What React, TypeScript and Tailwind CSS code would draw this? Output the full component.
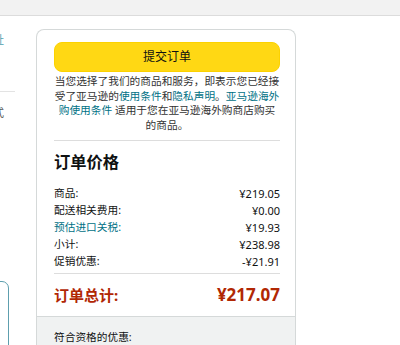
const rows = [
  { label: "商品:", value: "¥219.05" },
  { label: "配送相关费用:", value: "¥0.00" },
  { label: "预估进口关税:", value: "¥19.93", link: true },
  { label: "小计:", value: "¥238.98" },
  { label: "促销优惠:", value: "-¥21.91" },
];

const App = () => {
  return (
    <div
      className="w-[400px] h-[345px] overflow-hidden bg-white text-[#0f1111]"
      style={{ fontFamily: '"Noto Sans", "Noto Sans CJK SC", sans-serif' }}
    >
      {/* top strip */}
      <div className="h-[16px] bg-[#f2f2f2] border-b border-[#dcdcdc]" />

      <div className="flex">
        {/* clipped left column */}
        <div className="w-[15px] shrink-0 overflow-hidden">
          <div className="mt-[17px] flex justify-end pr-[11px] whitespace-nowrap text-[11px] leading-[14px] text-[#4f9fae]">
            寄送地址
          </div>
          <div className="mt-[44px] h-px bg-[#e3e3e3]" />
          <div className="mt-[14px] flex justify-end pr-[11px] whitespace-nowrap text-[11px] leading-[14px] text-[#555]">
            付款方式
          </div>
          <div className="mt-[161px] ml-[-20px] w-[29px] h-[80px] rounded-tr-[7px] border border-[#5e9fae]" />
        </div>

        {/* order summary card */}
        <div className="ml-[21px] mt-[13px] w-[260px] shrink-0 rounded-t-[8px] border border-[#d5d9d9] border-b-0">
          <div className="pl-[17px] pr-[15px] pt-[12px]">
            <button className="w-full h-[30px] rounded-[8px] bg-[#ffd814] border border-[#fcd200] text-[12px] text-[#0f1111]">
              提交订单
            </button>
            <p className="mt-[2px] text-center text-[10.7px] leading-[14.5px] text-[#333] whitespace-nowrap">
              当您选择了我们的商品和服务，即表示您已经接
              <br />
              受了亚马逊的<span className="text-[#007185]">使用条件</span>和
              <span className="text-[#007185]">隐私声明</span>。
              <span className="text-[#007185]">亚马逊海外</span>
              <br />
              <span className="text-[#007185]"> 购使用条件</span> 适用于您在亚马逊海外购商店购买
              <br />
              的商品。
            </p>
            <div className="mt-[8px] h-px bg-[#dddddd]" />
            <h2 className="mt-[9px] text-[16.3px] leading-[24px] font-bold">订单价格</h2>
            <div className="mt-[11px] text-[10.7px] leading-[17px]">
              {rows.map((r) => (
                <div key={r.label} className="flex justify-between">
                  <span className={r.link ? "text-[#007185]" : ""}>{r.label}</span>
                  <span className="text-[11px]">{r.value}</span>
                </div>
              ))}
            </div>
            <div className="mt-[3px] h-px bg-[#dddddd]" />
            <div className="mt-[9px] flex items-center justify-between leading-[24px] font-bold text-[#b12704]">
              <span className="text-[15px]">订单总计:</span>
              <span className="text-[17px]">¥217.07</span>
            </div>
          </div>
          <div className="mt-[9px] border-t border-[#d5d9d9] bg-[#f0f2f2] pl-[17px] pr-[15px] pt-[12px] pb-[20px] text-[10.7px] leading-[17px]">
            符合资格的优惠:
          </div>
        </div>
      </div>
    </div>
  );
};

export default App;
